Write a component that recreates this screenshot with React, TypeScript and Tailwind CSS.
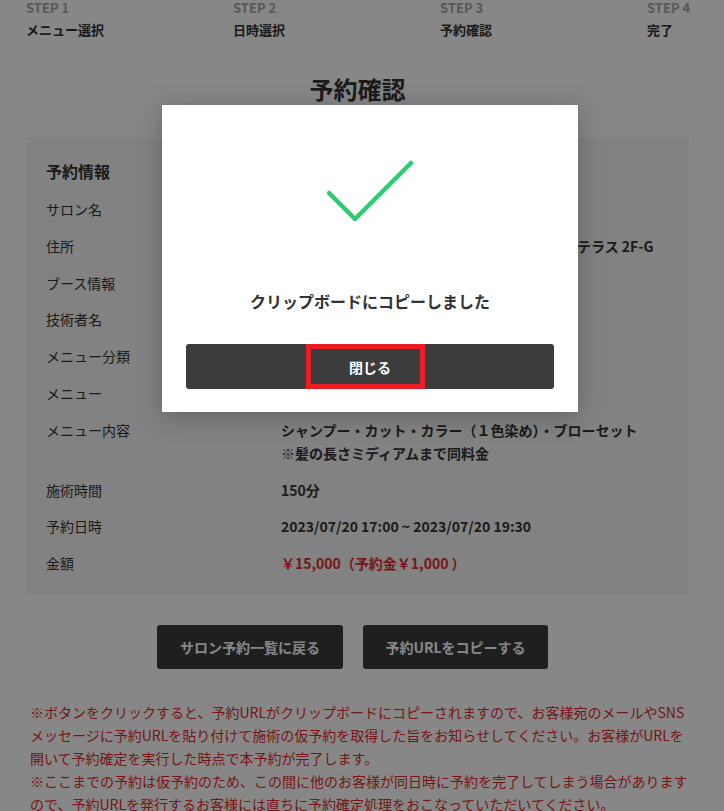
const rows: { label: string; value: React.ReactNode; red?: boolean }[] = [
  { label: "サロン名", value: "SALON LOOP 表参道" },
  { label: "住所", value: "東京都渋谷区神宮前4丁目12-101 表参道ヒルズテラス 2F-G" },
  { label: "ブース情報", value: "ブースA" },
  { label: "技術者名", value: "山田 花子" },
  { label: "メニュー分類", value: "カラー" },
  { label: "メニュー", value: "カット＋カラー" },
  {
    label: "メニュー内容",
    value: (
      <>
        シャンプー・カット・カラー（１色染め）・ブローセット
        <br />
        ※髪の長さミディアムまで同料金
      </>
    ),
  },
  { label: "施術時間", value: "150分" },
  { label: "予約日時", value: "2023/07/20 17:00 ~ 2023/07/20 19:30" },
  { label: "金額", value: "￥15,000（予約金￥1,000 ）", red: true },
];

const steps = [
  { step: "STEP 1", name: "メニュー選択" },
  { step: "STEP 2", name: "日時選択" },
  { step: "STEP 3", name: "予約確認" },
  { step: "STEP 4", name: "完了" },
];

function StepBar() {
  return (
    <ol className="grid grid-cols-[207px_207px_207px_1fr] whitespace-nowrap text-[13px] font-bold leading-4">
      {steps.map((s) => (
        <li key={s.step} className="flex flex-col gap-[6px]">
          <span className="text-[#a6a6a6]">{s.step}</span>
          <span className="text-[#333]">{s.name}</span>
        </li>
      ))}
    </ol>
  );
}

function CopiedModal() {
  return (
    <div className="absolute left-[162px] top-[105px] flex w-[416px] flex-col items-center bg-white px-6 pb-[23px] pt-[54px] shadow-[0_4px_24px_rgba(0,0,0,0.25)]">
      <svg width="90" height="64" viewBox="0 0 90 64" fill="none">
        <path
          d="M4 34 L30 60 L86 4"
          stroke="#2ecc71"
          strokeWidth="4.5"
          strokeLinecap="round"
          strokeLinejoin="round"
        />
      </svg>
      <p className="mt-[66px] text-base font-bold leading-6 text-[#333]">
        クリップボードにコピーしました
      </p>
      <button className="relative mt-[31px] flex h-[45px] w-full items-center justify-center rounded-[3px] bg-[#3c3c3c] text-sm font-bold text-white">
        閉じる
        <span className="absolute left-[120px] top-0 h-full w-[119px] border-[5px] border-[#ee1c24]" />
      </button>
    </div>
  );
}

export default function App() {
  return (
    <div className="relative h-[811px] overflow-hidden bg-white font-['Noto_Sans_CJK_JP',sans-serif] text-[#333]">
      <div className="ml-[26px] w-[663px]">
        <StepBar />

        <h1 className="mt-[35px] text-center text-2xl font-bold leading-8">
          予約確認
        </h1>

        <section className="mt-[33px] bg-[#f5f5f5] px-5 pb-5 pt-[21px]">
          <h2 className="text-base font-bold leading-6">予約情報</h2>
          <dl className="mt-[15px] flex flex-col gap-[13.8px] text-sm leading-[23px]">
            {rows.map((r) => (
              <div key={r.label} className="grid grid-cols-[235px_1fr]">
                <dt>{r.label}</dt>
                <dd className={r.red ? "font-bold text-[#e02b2b]" : "whitespace-nowrap font-bold"}>
                  {r.value}
                </dd>
              </div>
            ))}
          </dl>
        </section>

        <div className="mt-[30px] flex justify-center gap-5 pr-[10px]">
          <button className="h-[44px] w-[186px] rounded-[3px] bg-[#3c3c3c] text-sm font-bold text-white">
            サロン予約一覧に戻る
          </button>
          <button className="h-[44px] w-[185px] rounded-[3px] bg-[#3c3c3c] text-sm font-bold text-white">
            予約URLをコピーする
          </button>
        </div>
      </div>

      <div className="ml-[30px] mt-[32px] w-[680px] text-sm leading-[23px] text-[#e02b2b]">
        <p>
          ※ボタンをクリックすると、予約URLがクリップボードにコピーされますので、お客様宛のメールやSNS
          <br />
          メッセージに予約URLを貼り付けて施術の仮予約を取得した旨をお知らせしてください。お客様がURLを
          <br />
          開いて予約確定を実行した時点で本予約が完了します。
        </p>
        <p>
          ※ここまでの予約は仮予約のため、この間に他のお客様が同日時に予約を完了してしまう場合があります
          <br />
          ので、予約URLを発行するお客様には直ちに予約確定処理をおこなっていただいてください。
        </p>
      </div>

      <div className="absolute inset-0 bg-black/[0.47]" />
      <CopiedModal />
    </div>
  );
}
